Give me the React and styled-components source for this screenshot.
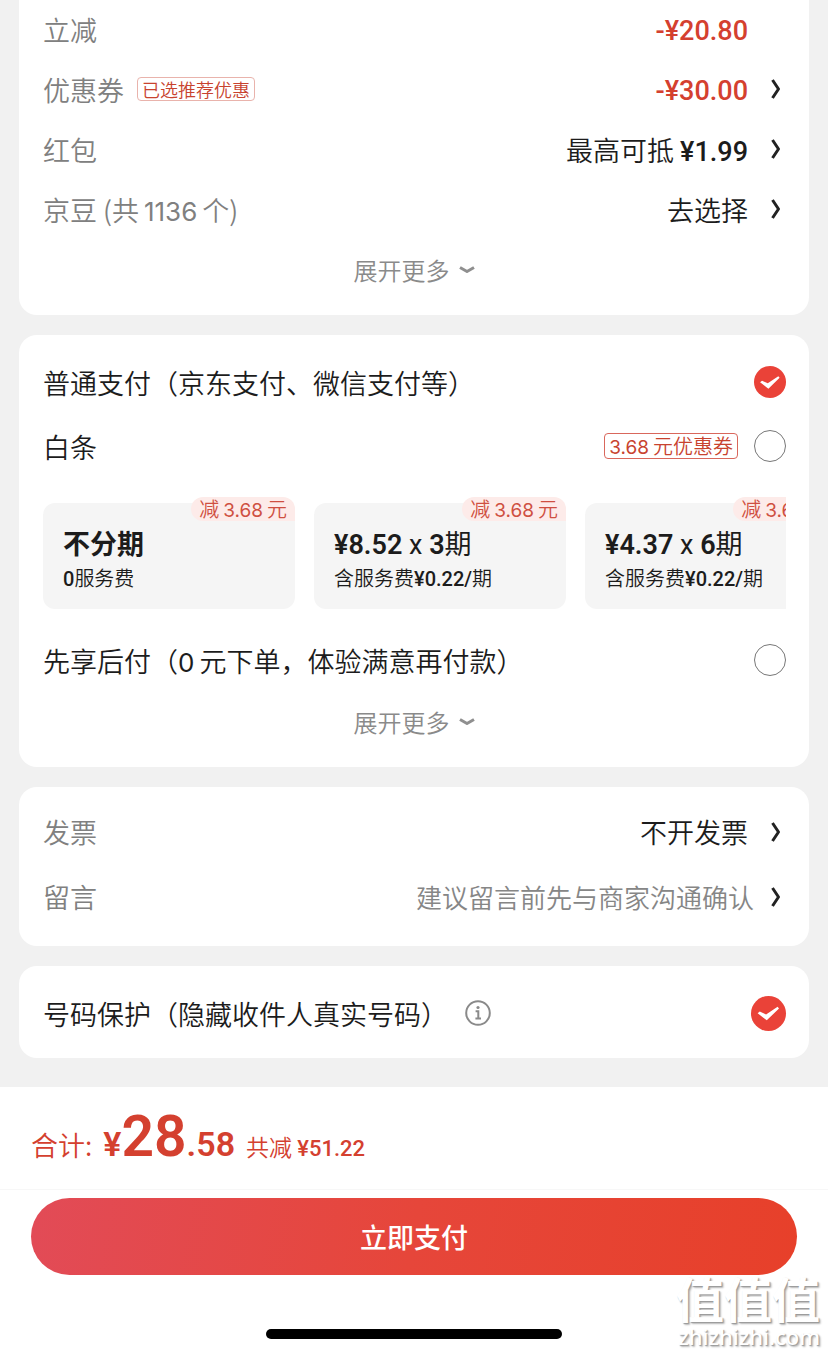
import React, { useState } from 'react';
import styled, { createGlobalStyle } from 'styled-components';

const plans = [
    { id: 'full', name: '不分期', fee: '0', off: '3.68' },
    { id: 'three', price: '8.52', times: 3, off: '3.68' },
    { id: 'six', price: '4.37', times: 6, off: '3.68' },
];

function Arrow() {
    return (
        <ArrowIcon viewBox="0 0 12 20" aria-hidden="true">
            <path d="M2.5 1 L8.5 10 L2.5 19" />
        </ArrowIcon>
    );
}

function More() {
    return (
        <MoreButton type="button">
            展开更多
            <MoreIcon viewBox="0 0 18 10" aria-hidden="true">
                <path d="M2 2.5 L9 6.5 L16 2.5" />
            </MoreIcon>
        </MoreButton>
    );
}

function App() {
    const [pay, setPay] = useState('normal');
    const [protect, setProtect] = useState(true);

    return (
        <Page>
            <GlobalStyle />
            <Main>
                <TopCard>
                    <Row>
                        <Label>立减</Label>
                        <Value><Price $red>-¥20.80</Price></Value>
                    </Row>
                    <Row>
                        <Label>优惠券</Label>
                        <Tag $pale>已选推荐优惠</Tag>
                        <ValueButton type="button">
                            <Price $red>-¥30.00</Price>
                            <Arrow />
                        </ValueButton>
                    </Row>
                    <Row>
                        <Label>红包</Label>
                        <ValueButton type="button">
                            <span>最高可抵 <Price>¥1.99</Price></span>
                            <Arrow />
                        </ValueButton>
                    </Row>
                    <Row>
                        <Label>京豆 (共<Num>1136</Num>个)</Label>
                        <ValueButton type="button">
                            去选择
                            <Arrow />
                        </ValueButton>
                    </Row>
                    <More />
                </TopCard>

                <Card>
                    <PayRow>
                        普通支付（京东支付、微信支付等）
                        <Radio name="pay" checked={pay === 'normal'} onChange={() => setPay('normal')} />
                    </PayRow>
                    <PayRow>
                        白条
                        <PayTag><Num>3.68</Num>元优惠券</PayTag>
                        <Radio name="pay" checked={pay === 'baitiao'} onChange={() => setPay('baitiao')} />
                    </PayRow>
                    <Plans>
                        {plans.map(plan => (
                            <Plan key={plan.id} type="button">
                                <Off>减<Num>{plan.off}</Num>元</Off>
                                {
                                    plan.name
                                        ? <PlanName $bold>{plan.name}</PlanName>
                                        : <PlanName><b>¥{plan.price}</b> x <b>{plan.times}</b>期</PlanName>
                                }
                                {
                                    plan.name
                                        ? <PlanFee><b>{plan.fee}</b>服务费</PlanFee>
                                        : <PlanFee>含服务费<b>¥0.22/</b>期</PlanFee>
                                }
                            </Plan>
                        ))}
                    </Plans>
                    <PayRow>
                        <span>先享后付（<Num>0</Num>元下单，体验满意再付款）</span>
                        <Radio name="pay" checked={pay === 'later'} onChange={() => setPay('later')} />
                    </PayRow>
                    <More />
                </Card>

                <InvoiceCard>
                    <Row $tall>
                        <Label>发票</Label>
                        <ValueButton type="button">
                            不开发票
                            <Arrow />
                        </ValueButton>
                    </Row>
                    <Row $tall>
                        <Label>留言</Label>
                        <ValueButton type="button" $hint>
                            建议留言前先与商家沟通确认
                            <Arrow />
                        </ValueButton>
                    </Row>
                </InvoiceCard>

                <ProtectCard>
                    <PayRow>
                        号码保护（隐藏收件人真实号码）
                        <InfoIcon viewBox="0 0 26 26" aria-hidden="true">
                            <circle cx="13" cy="13" r="11.8" />
                            <path d="M10.6 11.3 H13.3 V18.2 M10.4 18.4 H16" />
                            <circle className="dot" cx="13" cy="7.5" r="1.6" />
                        </InfoIcon>
                        <Check checked={protect} onChange={() => setProtect(!protect)} />
                    </PayRow>
                </ProtectCard>
            </Main>

            <Footer>
                <Total>
                    <TotalLabel>合计:</TotalLabel>
                    <Sum><small>¥</small>28<small>.58</small></Sum>
                    <Saved>共减 <b>¥51.22</b></Saved>
                </Total>
                <PayButton type="button">立即支付</PayButton>
                <HomeBar />
            </Footer>

            <Watermark>
                <WatermarkName>值值值</WatermarkName>
                <WatermarkSite>zhizhizhi.com</WatermarkSite>
            </Watermark>
        </Page>
    );
}

const GlobalStyle = createGlobalStyle`
    * {
        box-sizing: border-box;
    }

    body {
        margin: 0;
        background: #fff;
        color: #1c1c1c;
        font-family: 'Noto Sans CJK SC', sans-serif;
        font-size: 27px;
        font-weight: 350;
    }
`;

const Button = styled.button`
    border: 0;
    padding: 0;
    background: none;
    color: inherit;
    font: inherit;
    cursor: pointer;
`;

const Page = styled.div`
    position: relative;
`;

const Main = styled.main`
    display: flex;
    flex-direction: column;
    gap: 20px;
    padding: 0 19px 29px;
    background: #f1f1f1;
`;

const Card = styled.section`
    padding: 15px 23px 15px 24px;
    border-radius: 18px;
    background: #fff;
`;

const TopCard = styled(Card)`
    padding-top: 0;
    border-radius: 0 0 18px 18px;
`;

const InvoiceCard = styled(Card)`
    padding-top: 13px;
    padding-bottom: 16px;
`;

const ProtectCard = styled(Card)`
    padding-bottom: 13px;
`;

const Row = styled.div`
    display: flex;
    align-items: center;
    height: ${props => (props.$tall ? '65px' : '60px')};
    padding-bottom: 2px;
`;

const Label = styled.span`
    color: #808080;
`;

const Num = styled.span`
    margin: 0 5px;
    font-family: Inter, sans-serif;
    font-size: 26px;
    font-weight: 400;
    line-height: 1;
`;

const Tag = styled.span`
    margin-left: 13px;
    padding: 0 4px;
    border: 1px solid ${props => (props.$pale ? '#e9b3ac' : '#d9675c')};
    border-radius: 4px;
    color: #c8432f;
    font-size: 18px;
    line-height: 22px;
`;

const PayTag = styled(Tag)`
    margin: 0 16px 0 auto;
    font-size: 20px;
    line-height: 24px;

    ${Num} {
        margin: 0 4px 0 0;
        font-size: 19px;
    }
`;

const Value = styled.span`
    display: flex;
    margin-left: auto;
    margin-right: 38px;
`;

const ValueButton = styled(Button)`
    display: flex;
    align-items: center;
    gap: ${props => (props.$hint ? '16px' : '22px')};
    margin-left: auto;
    color: ${props => (props.$hint ? '#868686' : '#1c1c1c')};
    font-size: ${props => (props.$hint ? '26px' : '27px')};
`;

const ArrowIcon = styled.svg`
    width: 12px;
    height: 20px;
    margin-right: 4px;
    fill: none;
    stroke: #222;
    stroke-width: 3;
    stroke-linejoin: round;
`;

const Price = styled.span`
    padding-top: ${props => (props.$red ? '3px' : '0')};
    color: ${props => (props.$red ? '#d4402f' : '#1c1c1c')};
    font-family: Roboto, sans-serif;
    font-size: 27px;
    font-weight: 500;
`;

const MoreButton = styled(Button)`
    display: flex;
    align-items: center;
    justify-content: center;
    gap: 8px;
    width: 100%;
    height: 60px;
    padding-bottom: 2px;
    color: #8a8a8a;
    font-size: 24px;
`;

const MoreIcon = styled.svg`
    width: 18px;
    height: 10px;
    margin-top: 2px;
    fill: none;
    stroke: #8f8f8f;
    stroke-width: 3;
    stroke-linejoin: round;
`;

const PayRow = styled.label`
    display: flex;
    align-items: center;
    height: 64px;

    ${Num} {
        margin-left: 0;
    }
`;

const Toggle = styled.input`
    flex: none;
    appearance: none;
    width: 32px;
    height: 32px;
    margin: 0;
    border: 1px solid #777;
    border-radius: 50%;

    &:checked {
        border: 0;
        background: #ea4238;
    }

    &:checked::before {
        content: '';
        display: block;
        height: 100%;
        background: #fff;
        clip-path: polygon(19% 51%, 25% 46%, 43% 54%, 76% 32%, 80% 37%, 45% 71%);
    }
`;

const Radio = styled(Toggle).attrs({ type: 'radio' })`
    margin-left: auto;

    ${PayTag} + & {
        margin-left: 0;
    }
`;

const Check = styled(Toggle).attrs({ type: 'checkbox' })`
    width: 35px;
    height: 35px;
    margin-left: auto;
`;

const Plans = styled.div`
    display: flex;
    gap: 19px;
    margin: 13px 0 19px;
    padding-top: 12px;
    overflow: hidden;
`;

const Plan = styled(Button)`
    position: relative;
    display: flex;
    flex: none;
    flex-direction: column;
    justify-content: center;
    width: 252px;
    height: 106px;
    padding: 10px 20px 0;
    border-radius: 12px;
    background: #f5f5f5;
    text-align: left;
    white-space: nowrap;
`;

const Off = styled.span`
    position: absolute;
    top: -6px;
    right: 0;
    padding: 0 8px;
    border-radius: 12px 12px 0 12px;
    background: #fdebe9;
    color: #cf4f41;
    font-size: 20px;
    line-height: 24px;

    ${Num} {
        margin: 0 4px;
        font-size: 19px;
    }
`;

const PlanName = styled.span`
    font-family: Roboto, 'Noto Sans CJK SC', sans-serif;
    font-size: 27px;
    font-weight: ${props => (props.$bold ? 700 : 400)};
    line-height: 36px;

    b {
        font-weight: 600;
    }
`;

const PlanFee = styled.span`
    font-family: Roboto, 'Noto Sans CJK SC', sans-serif;
    font-size: 20px;
    line-height: 32px;

    b {
        font-weight: 500;
    }
`;

const InfoIcon = styled.svg`
    width: 26px;
    height: 26px;
    margin-left: 17px;
    fill: none;
    stroke: #8a8a8a;
    stroke-width: 2;

    .dot {
        fill: #8a8a8a;
        stroke: none;
    }
`;

const Footer = styled.footer`
    display: flex;
    flex-direction: column;
    padding-bottom: 15px;
    background: #fff;
`;

const Total = styled.div`
    display: flex;
    align-items: baseline;
    gap: 11px;
    height: 103px;
    padding: 20px 31px 0;
    border-bottom: 1px solid #f7f7f7;
    color: #d4402f;
`;

const TotalLabel = styled.span`
    font-size: 27px;
    line-height: 60px;
`;

const Sum = styled.strong`
    font-family: Roboto, sans-serif;
    font-size: 57px;
    font-weight: 600;
    line-height: 60px;

    small {
        font-size: 34px;
    }
`;

const Saved = styled.span`
    font-size: 23px;
    line-height: 60px;

    b {
        font-family: Roboto, sans-serif;
        font-size: 22px;
        font-weight: 500;
    }
`;

const PayButton = styled(Button)`
    height: 77px;
    margin: 8px 31px 0;
    border-radius: 40px;
    background: linear-gradient(100deg, #e24b57, #e6463a 50%, #e7402a);
    color: #fff;
    font-weight: 500;
`;

const HomeBar = styled.div`
    align-self: center;
    width: 296px;
    height: 10px;
    margin-top: 54px;
    border-radius: 5px;
    background: #000;
`;

const Watermark = styled.div`
    position: absolute;
    right: 8px;
    bottom: 4px;
    display: flex;
    flex-direction: column;
    align-items: flex-end;
    color: #fff;
    font-weight: 700;
    text-shadow: 1px 1px 1px #999, 2px 2px 2px #bbb;
    pointer-events: none;
`;

const WatermarkName = styled.span`
    font-size: 48px;
    line-height: 50px;
`;

const WatermarkSite = styled.span`
    font-family: 'Noto Sans', sans-serif;
    font-size: 22px;
    font-weight: 500;
    line-height: 28px;
`;

export default App;
